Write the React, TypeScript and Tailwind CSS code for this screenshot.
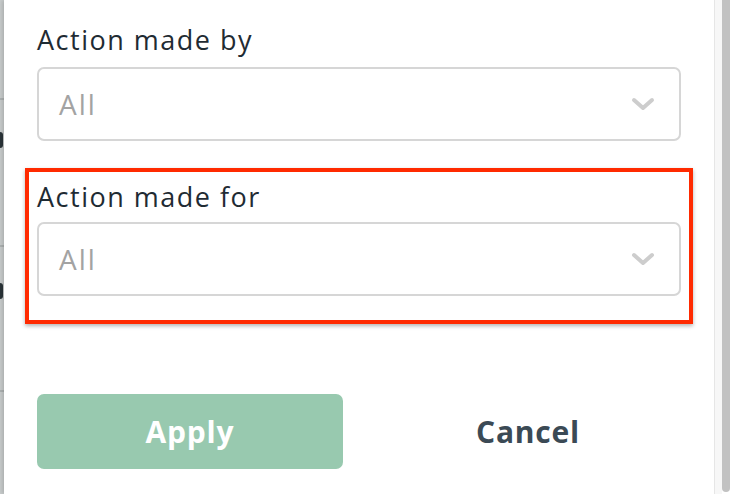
import React from 'react';

const Chevron: React.FC = () => (
  <svg width="24" height="14" viewBox="0 0 24 14" fill="none" className="shrink-0">
    <path d="M3 3l9 8 9-8" stroke="#cdcdcd" strokeWidth={4} strokeLinecap="round" strokeLinejoin="round" />
  </svg>
);

const Select: React.FC = () => (
  <div className="h-[74px] rounded-[7px] border-2 border-[#d6d6d6] bg-white flex items-center justify-between pl-[20px] pr-[24px]">
    <span className="text-[28px] tracking-[2px] text-[#a3a3a3]">All</span>
    <Chevron />
  </div>
);

const App: React.FC = () => {
  return (
    <div className="w-[730px] h-[494px] overflow-hidden flex bg-white" style={{ fontFamily: '"Open Sans", "Noto Sans", sans-serif' }}>
      {/* page behind, left edge */}
      <div className="w-[4px] h-full bg-[#c9cdcd] flex flex-col items-start">
        <div className="h-[98px]" />
        <div className="h-[2px] w-full bg-[#aeb3b3]" />
        <div className="h-[32px]" />
        <div className="h-[16px] w-[3px] rounded-r-full bg-[#2a3338]" />
        <div className="h-[97px]" />
        <div className="h-[2px] w-full bg-[#aeb3b3]" />
        <div className="h-[36px]" />
        <div className="h-[16px] w-[3px] rounded-r-full bg-[#2a3338]" />
        <div className="h-[91px]" />
        <div className="h-[2px] w-full bg-[#aeb3b3]" />
      </div>

      {/* filter panel */}
      <div className="flex-1 bg-white pl-[33px] pr-[33px] pt-[22px] shadow-[-2px_0_4px_rgba(0,0,0,0.15)]">
        <div className="text-[27px] leading-[36px] tracking-[1.5px] text-[#1f2b33] mb-[9px]">Action made by</div>
        <Select />

        <div className="mt-[27px] -mx-[12px] border-[4px] border-[#ff2a00] px-[8px] pt-[7px] pb-[24px] shadow-[0_2px_4px_rgba(0,0,0,0.3)]">
          <div className="text-[27px] leading-[36px] tracking-[1.5px] text-[#1f2b33] mb-[7px]">Action made for</div>
          <Select />
        </div>

        <div className="grid grid-cols-2 gap-[32px] mt-[70px]">
          <button className="h-[75px] rounded-[7px] bg-[#98c9af] text-white text-[30px] tracking-[0.8px] font-bold">Apply</button>
          <button className="h-[75px] text-[#3b4a55] text-[30px] tracking-[0.8px] font-bold">Cancel</button>
        </div>
      </div>

      {/* scroll track */}
      <div className="w-[1px] h-full bg-[#e6e6e6]" />
      <div className="w-[7px] h-full bg-[#f7f7f7]" />
      <div className="w-[8px] h-[492px] bg-[#c2c2c2] rounded-b-[4px]" />
    </div>
  );
};

export default App;
